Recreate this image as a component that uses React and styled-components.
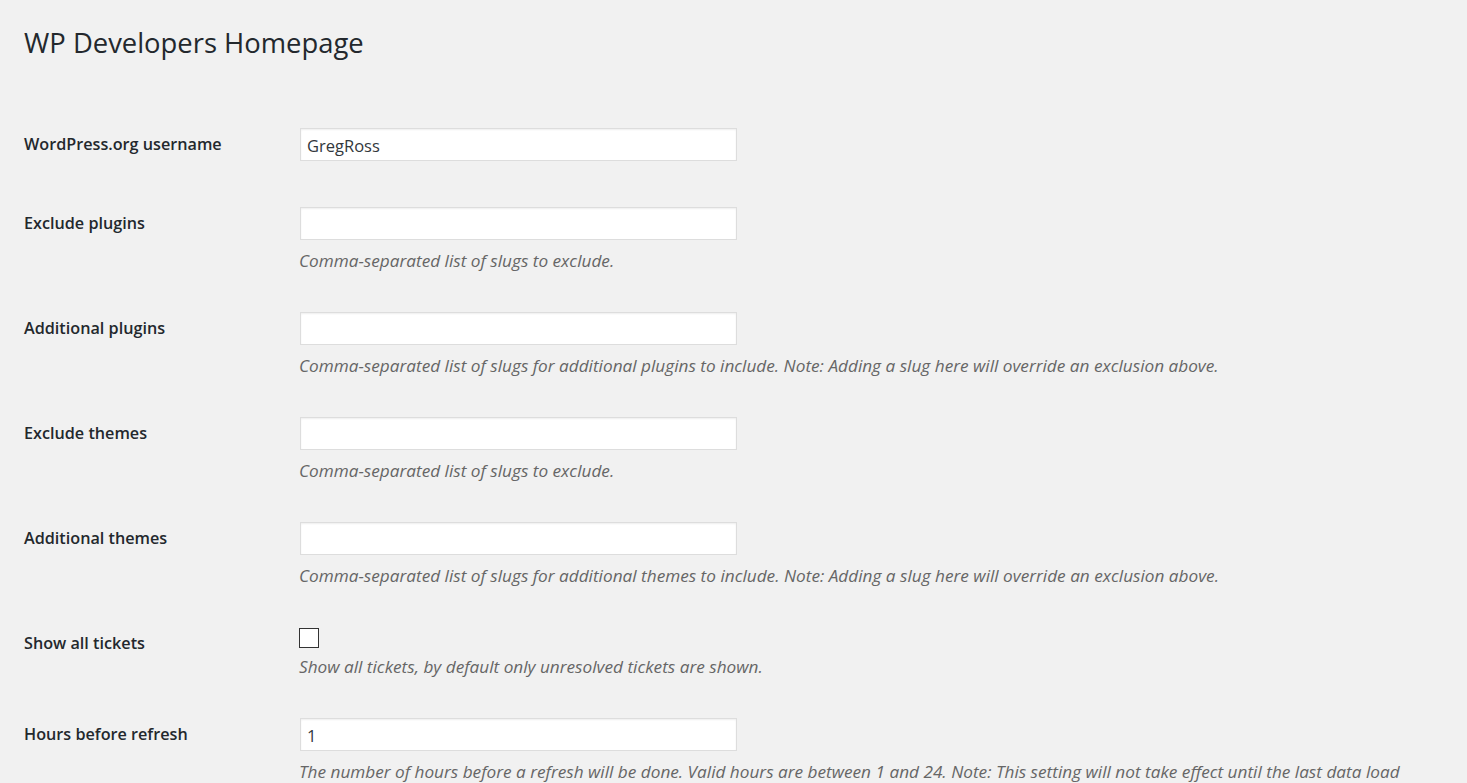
import React from "react";
import styled, { createGlobalStyle } from "styled-components";

const GlobalStyle = createGlobalStyle`
  html, body {
    margin: 0;
    padding: 0;
    background: #f1f1f1;
  }
  body {
    font-family: "Open Sans", "Noto Sans", "Liberation Sans", sans-serif;
    font-size: 17px;
    color: #444;
  }
`;

const FIELDS = [
  { id: "username", label: "WordPress.org username", value: "GregRoss" },
  {
    id: "exclude_plugins",
    label: "Exclude plugins",
    desc: "Comma-separated list of slugs to exclude.",
  },
  {
    id: "additional_plugins",
    label: "Additional plugins",
    desc: "Comma-separated list of slugs for additional plugins to include. Note: Adding a slug here will override an exclusion above.",
  },
  {
    id: "exclude_themes",
    label: "Exclude themes",
    desc: "Comma-separated list of slugs to exclude.",
  },
  {
    id: "additional_themes",
    label: "Additional themes",
    desc: "Comma-separated list of slugs for additional themes to include. Note: Adding a slug here will override an exclusion above.",
  },
  {
    id: "show_all",
    label: "Show all tickets",
    type: "checkbox",
    desc: "Show all tickets, by default only unresolved tickets are shown.",
  },
  {
    id: "hours",
    label: "Hours before refresh",
    value: "1",
    desc: "The number of hours before a refresh will be done. Valid hours are between 1 and 24. Note: This setting will not take effect until the last data load has expired.",
  },
];

function App() {
  return (
    <>
      <GlobalStyle />
      <Wrap>
        <Title>WP Developers Homepage</Title>
        <Form>
          {FIELDS.map((f) => (
            <Row key={f.id}>
              <Label htmlFor={f.id}>{f.label}</Label>
              <Field>
                {f.type === "checkbox" ? (
                  <CheckWrap>
                    <Check id={f.id} type="checkbox" />
                  </CheckWrap>
                ) : (
                  <TextInput id={f.id} type="text" defaultValue={f.value || ""} />
                )}
                {f.desc && <Description>{f.desc}</Description>}
              </Field>
            </Row>
          ))}
        </Form>
      </Wrap>
    </>
  );
}

export default App;

const Wrap = styled.div`
  padding: 0 20px 0 24px;
`;

const Title = styled.h1`
  margin: 0;
  padding: 28px 0 0;
  font-size: 27.4px;
  font-weight: 400;
  line-height: 30px;
  color: #23282d;
`;

const Form = styled.div`
  margin-top: 47px;
  display: flex;
  flex-direction: column;
`;

const Row = styled.div`
  display: flex;
  align-items: flex-start;
  padding: 23px 0;
`;

const Label = styled.label`
  box-sizing: border-box;
  width: 276px;
  height: 33px;
  flex-shrink: 0;
  font-size: 16.2px;
  font-weight: 600;
  line-height: 33px;
  color: #23282d;
`;

const Field = styled.div`
  flex: 1;
  max-width: 1110px;
  display: flex;
  flex-direction: column;
`;

const TextInput = styled.input`
  box-sizing: border-box;
  width: 437px;
  height: 33px;
  padding: 1px 6px 0;
  border: 1px solid #ddd;
  box-shadow: inset 0 1px 2px rgba(0, 0, 0, 0.07);
  background: #fff;
  font-family: inherit;
  font-size: 16.5px;
  color: #32373c;
  outline: none;
`;

const CheckWrap = styled.div`
  height: 21px;
  margin-bottom: -2px;
  display: flex;
  align-items: flex-start;
`;

const Check = styled.input`
  appearance: none;
  box-sizing: border-box;
  width: 20px;
  height: 20px;
  margin: 1px 0 0 -1px;
  border: 1px solid #333;
  background: #fff;
`;

const Description = styled.p`
  margin: 11px 0 -5px -1px;
  font-size: 17.2px;
  font-style: italic;
  line-height: 20px;
  color: #666;
`;
